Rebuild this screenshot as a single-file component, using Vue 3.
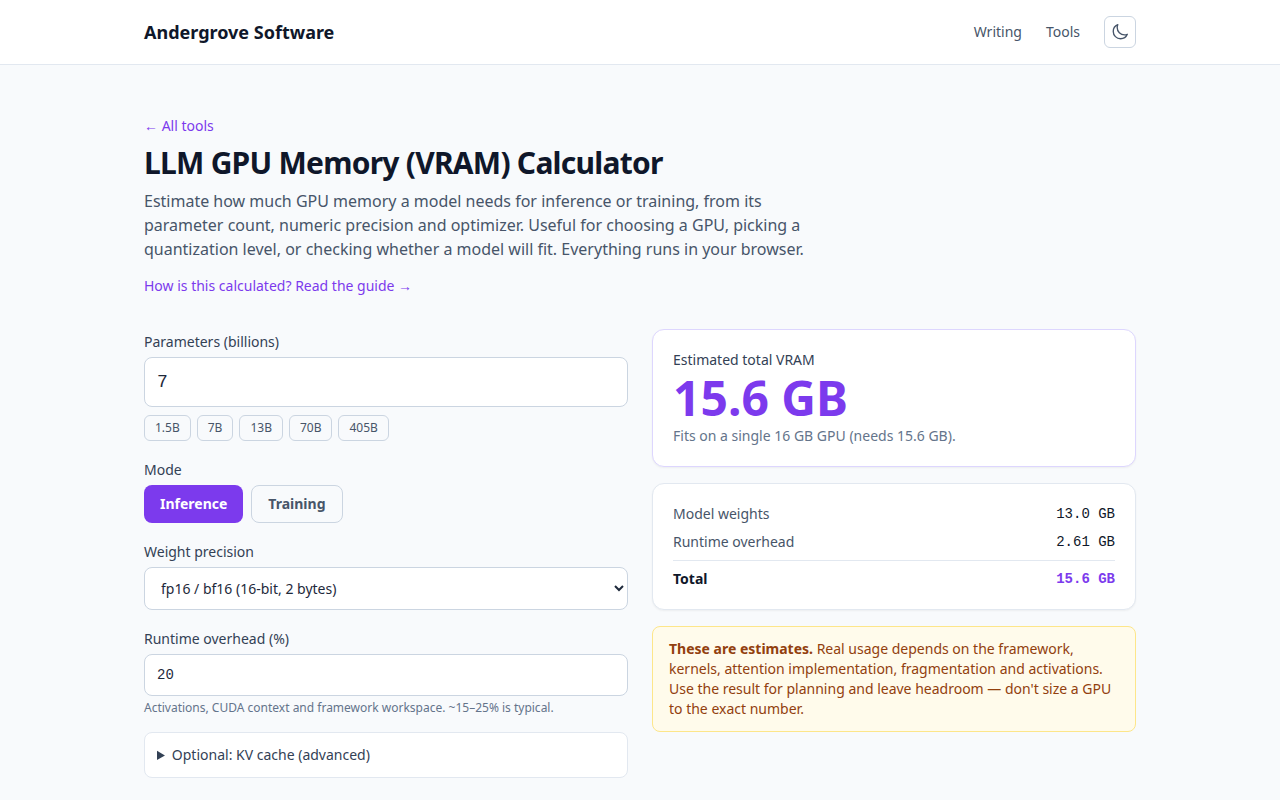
<script setup>
import { computed, ref } from 'vue'

const params = ref(7)
const presets = [1.5, 7, 13, 70, 405]
const mode = ref('inference')
const modes = [
  { id: 'inference', label: 'Inference' },
  { id: 'training', label: 'Training' },
]
const precisions = [
  { bytes: 4, label: 'fp32 (32-bit, 4 bytes)' },
  { bytes: 2, label: 'fp16 / bf16 (16-bit, 2 bytes)' },
  { bytes: 1, label: 'int8 (8-bit, 1 byte)' },
  { bytes: 0.5, label: 'int4 (4-bit, 0.5 bytes)' },
]
const bytes = ref(2)
const overhead = ref(20)
const context = ref(0)
const dark = ref(false)

const GIB = 2 ** 30
const weights = computed(() => (params.value * 1e9 * bytes.value) / GIB)
const training = computed(() => (mode.value === 'training' ? (params.value * 12e9) / GIB : 0))
const cache = computed(() => Number(context.value) || 0)
const runtime = computed(() => ((weights.value + training.value + cache.value) * overhead.value) / 100)
const total = computed(() => weights.value + training.value + cache.value + runtime.value)

const rows = computed(() => [
  { label: 'Model weights', value: weights.value },
  ...(training.value ? [{ label: 'Gradients and optimizer', value: training.value }] : []),
  ...(cache.value ? [{ label: 'KV cache', value: cache.value }] : []),
  { label: 'Runtime overhead', value: runtime.value },
])

const format = (n) => `${n >= 10 ? n.toFixed(1) : n.toFixed(2)} GB`

const fit = computed(() => {
  const size = [8, 12, 16, 24, 32, 48, 80, 96, 141].find((s) => s >= total.value)
  return size
    ? `Fits on a single ${size} GB GPU (needs ${format(total.value)}).`
    : `Needs ${Math.ceil(total.value / 80)} × 80 GB GPUs.`
})
</script>

<template>
  <div class="page">
    <header class="header">
      <div class="container bar">
        <a class="brand" href="#">Andergrove Software</a>
        <nav class="nav">
          <a href="#writing">Writing</a>
          <a href="#tools">Tools</a>
          <button class="theme" type="button" aria-label="Toggle dark mode" :aria-pressed="dark" @click="dark = !dark">
            <svg viewBox="0 0 24 24" fill="none" stroke="currentColor" stroke-width="1.8" stroke-linecap="round" stroke-linejoin="round" aria-hidden="true">
              <path d="M21.752 15.002A9.72 9.72 0 0 1 18 15.75c-5.385 0-9.75-4.365-9.75-9.75 0-1.33.266-2.597.748-3.752A9.753 9.753 0 0 0 3 11.25C3 16.635 7.365 21 12.75 21a9.753 9.753 0 0 0 9.002-5.998Z" />
            </svg>
          </button>
        </nav>
      </div>
    </header>

    <main class="container main">
      <div class="line"><a class="link" href="#tools">← All tools</a></div>
      <h1>LLM GPU Memory (VRAM) Calculator</h1>
      <p class="intro">
        Estimate how much GPU memory a model needs for inference or training, from its parameter count, numeric
        precision and optimizer. Useful for choosing a GPU, picking a quantization level, or checking whether a model
        will fit. Everything runs in your browser.
      </p>
      <p class="guide"><a class="link" href="#guide">How is this calculated? Read the guide →</a></p>

      <div class="grid">
        <form class="form" @submit.prevent>
          <div>
            <div class="line"><label for="params">Parameters (billions)</label></div>
            <input id="params" v-model.number="params" class="field large" type="text" inputmode="decimal" />
            <div class="chips">
              <button v-for="p in presets" :key="p" type="button" class="chip" @click="params = p">{{ p }}B</button>
            </div>
          </div>

          <div role="group" aria-labelledby="mode-label">
            <div class="line"><span id="mode-label">Mode</span></div>
            <div class="modes">
              <button
                v-for="m in modes"
                :key="m.id"
                type="button"
                class="mode"
                :class="{ active: mode === m.id }"
                :aria-pressed="mode === m.id"
                @click="mode = m.id"
              >{{ m.label }}</button>
            </div>
          </div>

          <div>
            <div class="line"><label for="precision">Weight precision</label></div>
            <select id="precision" v-model="bytes" class="field select">
              <option v-for="o in precisions" :key="o.bytes" :value="o.bytes">{{ o.label }}</option>
            </select>
          </div>

          <div>
            <div class="line"><label for="overhead">Runtime overhead (%)</label></div>
            <input id="overhead" v-model.number="overhead" class="field" type="text" inputmode="numeric" aria-describedby="overhead-hint" />
            <p id="overhead-hint" class="hint">Activations, CUDA context and framework workspace. ~15–25% is typical.</p>
          </div>

          <details class="advanced">
            <summary>Optional: KV cache (advanced)</summary>
            <div class="line"><label for="kv">KV cache (GB)</label></div>
            <input id="kv" v-model="context" class="field" type="text" inputmode="decimal" />
          </details>
        </form>

        <section class="results" aria-label="Results">
          <div class="card total-card">
            <p class="caption">Estimated total VRAM</p>
            <p class="figure">{{ format(total) }}</p>
            <p class="fit">{{ fit }}</p>
          </div>

          <dl class="card breakdown">
            <div v-for="r in rows" :key="r.label" class="row">
              <dt>{{ r.label }}</dt>
              <dd>{{ format(r.value) }}</dd>
            </div>
            <div class="row sum">
              <dt>Total</dt>
              <dd>{{ format(total) }}</dd>
            </div>
          </dl>

          <p class="note">
            <strong>These are estimates.</strong> Real usage depends on the framework, kernels, attention
            implementation, fragmentation and activations. Use the result for planning and leave headroom — don't size a
            GPU to the exact number.
          </p>
        </section>
      </div>
    </main>
  </div>
</template>

<style>
body {
  margin: 0;
  background: #f8fafc;
}
</style>

<style scoped>
.page {
  min-height: 100vh;
  overflow-x: hidden;
  font-family: 'Noto Sans', sans-serif;
  font-size: 16px;
  line-height: 24px;
  color: #0f172a;
}
.page *,
.page *::before {
  box-sizing: border-box;
}
h1,
p,
dl,
dd {
  margin: 0;
}
a {
  text-decoration: none;
}
button {
  font-family: inherit;
  cursor: pointer;
}
.container {
  max-width: 1024px;
  margin: 0 auto;
  padding: 0 16px;
}
.header {
  background: #fff;
  border-bottom: 1px solid #e2e8f0;
}
.bar {
  display: flex;
  align-items: center;
  justify-content: space-between;
  padding-top: 16px;
  padding-bottom: 16px;
}
.brand {
  font-size: 18px;
  line-height: 28px;
  font-weight: 700;
  color: #0f172a;
}
.nav {
  display: flex;
  align-items: center;
  gap: 24px;
  font-size: 14px;
  line-height: 20px;
}
.nav a {
  color: #475569;
}
.theme {
  display: inline-flex;
  align-items: center;
  justify-content: center;
  width: 32px;
  height: 32px;
  padding: 0;
  border: 1px solid #cbd5e1;
  border-radius: 6px;
  background: transparent;
  color: #475569;
}
.theme svg {
  width: 18px;
  height: 18px;
}
.main {
  padding-top: 48px;
  padding-bottom: 48px;
}
.link {
  font-size: 14px;
  line-height: 20px;
  color: #7c3aed;
}
h1 {
  margin-top: 8px;
  font-size: 30px;
  line-height: 36px;
  font-weight: 700;
  letter-spacing: -0.025em;
}
.intro {
  max-width: 672px;
  margin-top: 8px;
  color: #475569;
}
.guide {
  margin-top: 12px;
}
.grid {
  display: grid;
  grid-template-columns: repeat(2, minmax(0, 1fr));
  align-items: start;
  gap: 24px;
  margin-top: 32px;
}
.form,
.results {
  display: flex;
  flex-direction: column;
  gap: 16px;
}
label,
#mode-label {
  font-size: 14px;
  line-height: 20px;
  color: #334155;
}
.field {
  display: block;
  width: 100%;
  margin-top: 4px;
  padding: 10px 12px;
  border: 1px solid #cbd5e1;
  border-radius: 8px;
  background: #fff;
  color: #1e293b;
  font-family: 'Liberation Mono', monospace;
  font-size: 14px;
  line-height: 20px;
}
.large {
  font-size: 18px;
  line-height: 28px;
}
.select {
  height: 43px;
  font-family: inherit;
}
.chips {
  display: flex;
  flex-wrap: wrap;
  gap: 6px;
  margin-top: 8px;
}
.chip {
  padding: 4px 10px;
  border: 1px solid #cbd5e1;
  border-radius: 6px;
  background: transparent;
  color: #475569;
  font-size: 12px;
  line-height: 16px;
}
.modes {
  display: flex;
  gap: 8px;
  margin-top: 4px;
}
.mode {
  padding: 8px 16px;
  border: 1px solid #cbd5e1;
  border-radius: 8px;
  background: transparent;
  color: #475569;
  font-size: 14px;
  line-height: 20px;
  font-weight: 700;
}
.mode.active {
  padding: 9px 16px;
  border: 0;
  background: #7c3aed;
  color: #fff;
}
.hint {
  margin-top: 4px;
  font-size: 12px;
  line-height: 16px;
  color: #64748b;
}
.advanced {
  padding: 12px;
  border: 1px solid #e2e8f0;
  border-radius: 8px;
  background: #fff;
}
.advanced summary {
  font-size: 14px;
  line-height: 20px;
  color: #334155;
  cursor: pointer;
}
.card {
  padding: 20px;
  border: 1px solid #e2e8f0;
  border-radius: 12px;
  background: #fff;
  box-shadow: 0 1px 2px rgba(0, 0, 0, 0.05);
  font-size: 14px;
  line-height: 20px;
}
.total-card {
  border-color: #ddd6fe;
}
.caption {
  color: #334155;
}
.figure {
  margin-top: 4px;
  font-size: 48px;
  line-height: 48px;
  font-weight: 700;
  color: #7c3aed;
}
.fit {
  margin-top: 4px;
  color: #64748b;
}
.breakdown {
  display: flex;
  flex-direction: column;
  gap: 8px;
}
.row {
  display: flex;
  justify-content: space-between;
}
.row dt {
  color: #475569;
}
.row dd {
  font-family: 'Liberation Mono', monospace;
}
.sum {
  padding-top: 8px;
  border-top: 1px solid #e2e8f0;
  font-weight: 700;
}
.sum dt {
  color: #0f172a;
}
.sum dd {
  color: #7c3aed;
}
.note {
  padding: 12px 16px;
  border: 1px solid #fde68a;
  border-radius: 8px;
  background: #fffbeb;
  color: #92400e;
  font-size: 14px;
  line-height: 20px;
}
.note strong {
  font-weight: 700;
}
@media (max-width: 767px) {
  .grid {
    grid-template-columns: minmax(0, 1fr);
  }
}
</style>
